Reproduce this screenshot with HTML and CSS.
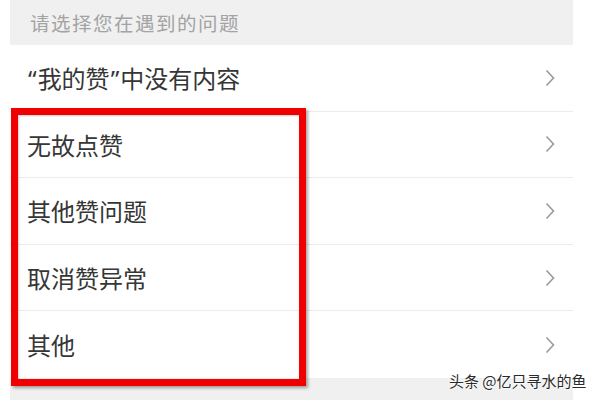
FILE: index.html
```html
<!DOCTYPE html>
<html lang="zh-CN">
<head>
<meta charset="utf-8">
<link rel="stylesheet" href="styles.css">
</head>
<body>
<div class="page">
  <div class="panel">
    <div class="section-title">请选择您在遇到的问题</div>
    <ul class="list">
      <li class="row"><span class="label"><span class="q">“</span>我的赞<span class="q">”</span>中没有内容</span><svg class="chev" viewBox="0 0 10 18" width="10" height="18"><path d="M1.5 1.5 L8.5 9 L1.5 16.5" fill="none" stroke="#9a9a9a" stroke-width="1.6"/></svg></li>
      <li class="row"><span class="label">无故点赞</span><svg class="chev" viewBox="0 0 10 18" width="10" height="18"><path d="M1.5 1.5 L8.5 9 L1.5 16.5" fill="none" stroke="#9a9a9a" stroke-width="1.6"/></svg></li>
      <li class="row"><span class="label">其他赞问题</span><svg class="chev" viewBox="0 0 10 18" width="10" height="18"><path d="M1.5 1.5 L8.5 9 L1.5 16.5" fill="none" stroke="#9a9a9a" stroke-width="1.6"/></svg></li>
      <li class="row"><span class="label">取消赞异常</span><svg class="chev" viewBox="0 0 10 18" width="10" height="18"><path d="M1.5 1.5 L8.5 9 L1.5 16.5" fill="none" stroke="#9a9a9a" stroke-width="1.6"/></svg></li>
      <li class="row"><span class="label">其他</span><svg class="chev" viewBox="0 0 10 18" width="10" height="18"><path d="M1.5 1.5 L8.5 9 L1.5 16.5" fill="none" stroke="#9a9a9a" stroke-width="1.6"/></svg></li>
    </ul>
    <div class="footer-gap"></div>
  </div>
  <div class="highlight"></div>
  <div class="watermark">头条 @亿只寻水的鱼</div>
</div>
</body>
</html>
```
FILE: styles.css
```css
* { box-sizing: border-box; }
html, body {
  margin: 0;
  padding: 0;
  background: #ffffff;
}
body {
  width: 600px;
  height: 400px;
  overflow: hidden;
  font-family: "Noto Sans CJK SC", "Noto Sans", sans-serif;
}
.page {
  position: relative;
  width: 600px;
  height: 400px;
  padding-left: 10px;
}
.panel {
  width: 563px;
  height: 400px;
  display: flex;
  flex-direction: column;
}
.section-title {
  height: 45px;
  background: #f0f0f0;
  color: #a3a3a3;
  font-size: 19.5px;
  letter-spacing: 1.5px;
  padding-left: 20px;
  display: flex;
  align-items: center;
  padding-bottom: 1px;
}
.list {
  list-style: none;
  margin: 0;
  padding: 0;
  background: #ffffff;
}
.row {
  height: 66.6px;
  border-bottom: 1px solid #ececec;
  display: flex;
  align-items: center;
  justify-content: space-between;
  padding-left: 17px;
  padding-right: 18px;
}
.row:last-child { border-bottom: none; }
.label {
  color: #363636;
  font-size: 24px;
  line-height: 1;
  margin-top: 1px;
}
.q {
  font-family: "Noto Sans", sans-serif;
  font-size: 24px;
  margin: 0 1px;
}
.chev { display: block; }
.footer-gap {
  flex: 1;
  background: #f0f0f0;
}
.highlight {
  position: absolute;
  left: 11px;
  top: 108px;
  width: 295px;
  height: 278px;
  border: 7px solid #f00000;
  box-shadow: 2px 2px 3px rgba(0, 0, 0, 0.35), inset 1px 1px 2px rgba(0, 0, 0, 0.2);
}
.watermark {
  position: absolute;
  left: 449px;
  top: 370px;
  font-size: 15px;
  line-height: 22px;
  color: #2a2a2a;
  text-shadow: 0 0 2px #fff, 0 0 2px #fff, 0 0 3px #fff;
  white-space: nowrap;
}
```
